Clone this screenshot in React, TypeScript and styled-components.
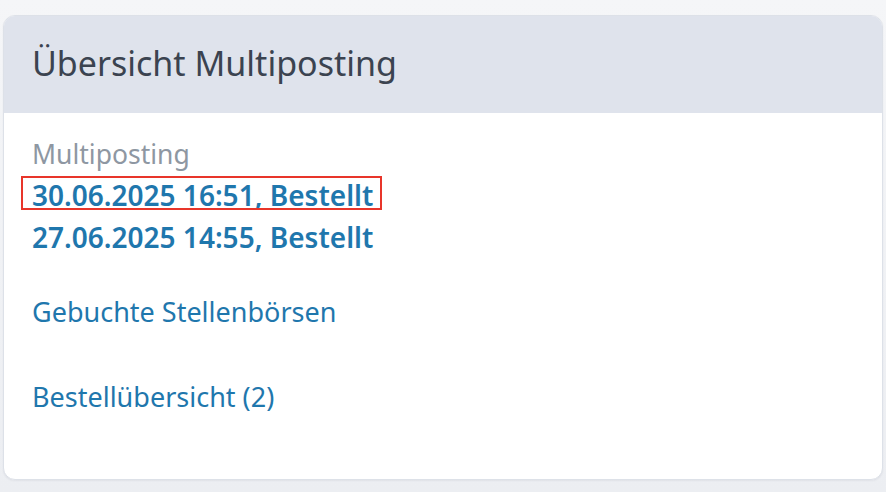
import styled, { createGlobalStyle } from "styled-components";

const GlobalStyle = createGlobalStyle`
  html, body {
    margin: 0;
    padding: 0;
    background: #f3f4f7;
    font-family: "Noto Sans", "Open Sans", sans-serif;
  }
`;

interface OrderEntry {
  label: string;
  highlighted?: boolean;
}

const orders: OrderEntry[] = [
  { label: "30.06.2025 16:51, Bestellt", highlighted: true },
  { label: "27.06.2025 14:55, Bestellt" },
];

export default function App() {
  return (
    <>
      <GlobalStyle />
      <Page>
        <Card>
          <CardHeader>
            <Title>Übersicht Multiposting</Title>
          </CardHeader>
          <CardBody>
            <Section>
              <Label>Multiposting</Label>
              {orders.map((o) => (
                <OrderLink key={o.label} href="#" $highlighted={o.highlighted}>
                  {o.label}
                </OrderLink>
              ))}
            </Section>
            <PlainLink href="#" $gap={33}>
              Gebuchte Stellenbörsen
            </PlainLink>
            <PlainLink href="#" $gap={43}>
              Bestellübersicht (2)
            </PlainLink>
          </CardBody>
        </Card>
      </Page>
    </>
  );
}

/* ─── STYLED COMPONENTS ───────────────────────────────────────────── */

const Page = styled.div`
  padding: 15px 3px 12px 3px;
  background: linear-gradient(#f5f6f8, #eceef2);
`;

const Card = styled.div`
  height: 465px;
  box-sizing: border-box;
  background: #ffffff;
  border: 1px solid #dde1e8;
  border-radius: 12px;
  overflow: hidden;
  display: flex;
  flex-direction: column;
  box-shadow: 0 1px 2px rgba(30, 40, 60, 0.06);
`;

const CardHeader = styled.div`
  background: #dfe3ec;
  height: 97px;
  box-sizing: border-box;
  display: flex;
  align-items: center;
  padding: 0 28px 4px;
`;

const Title = styled.h1`
  margin: 0;
  font-size: 34px;
  font-weight: 400;
  color: #3b4350;
`;

const CardBody = styled.div`
  padding: 21px 28px;
  display: flex;
  flex-direction: column;
  align-items: flex-start;
`;

const Section = styled.div`
  display: flex;
  flex-direction: column;
  align-items: flex-start;
`;

const Label = styled.span`
  font-size: 26.5px;
  line-height: 40px;
  color: #8e97a2;
`;

const OrderLink = styled.a<{ $highlighted?: boolean }>`
  position: relative;
  font-size: 28px;
  line-height: 42px;
  font-weight: 600;
  color: #1f77ad;
  text-decoration: none;

  &::after {
    content: "";
    display: ${(p) => (p.$highlighted ? "block" : "none")};
    position: absolute;
    left: -11px;
    right: -9px;
    top: 2px;
    bottom: 6px;
    border: 2px solid #e8352a;
  }
`;

const PlainLink = styled.a<{ $gap: number }>`
  margin-top: ${(p) => p.$gap}px;
  font-size: 27px;
  line-height: 42px;
  color: #1f77ad;
  text-decoration: none;
`;
